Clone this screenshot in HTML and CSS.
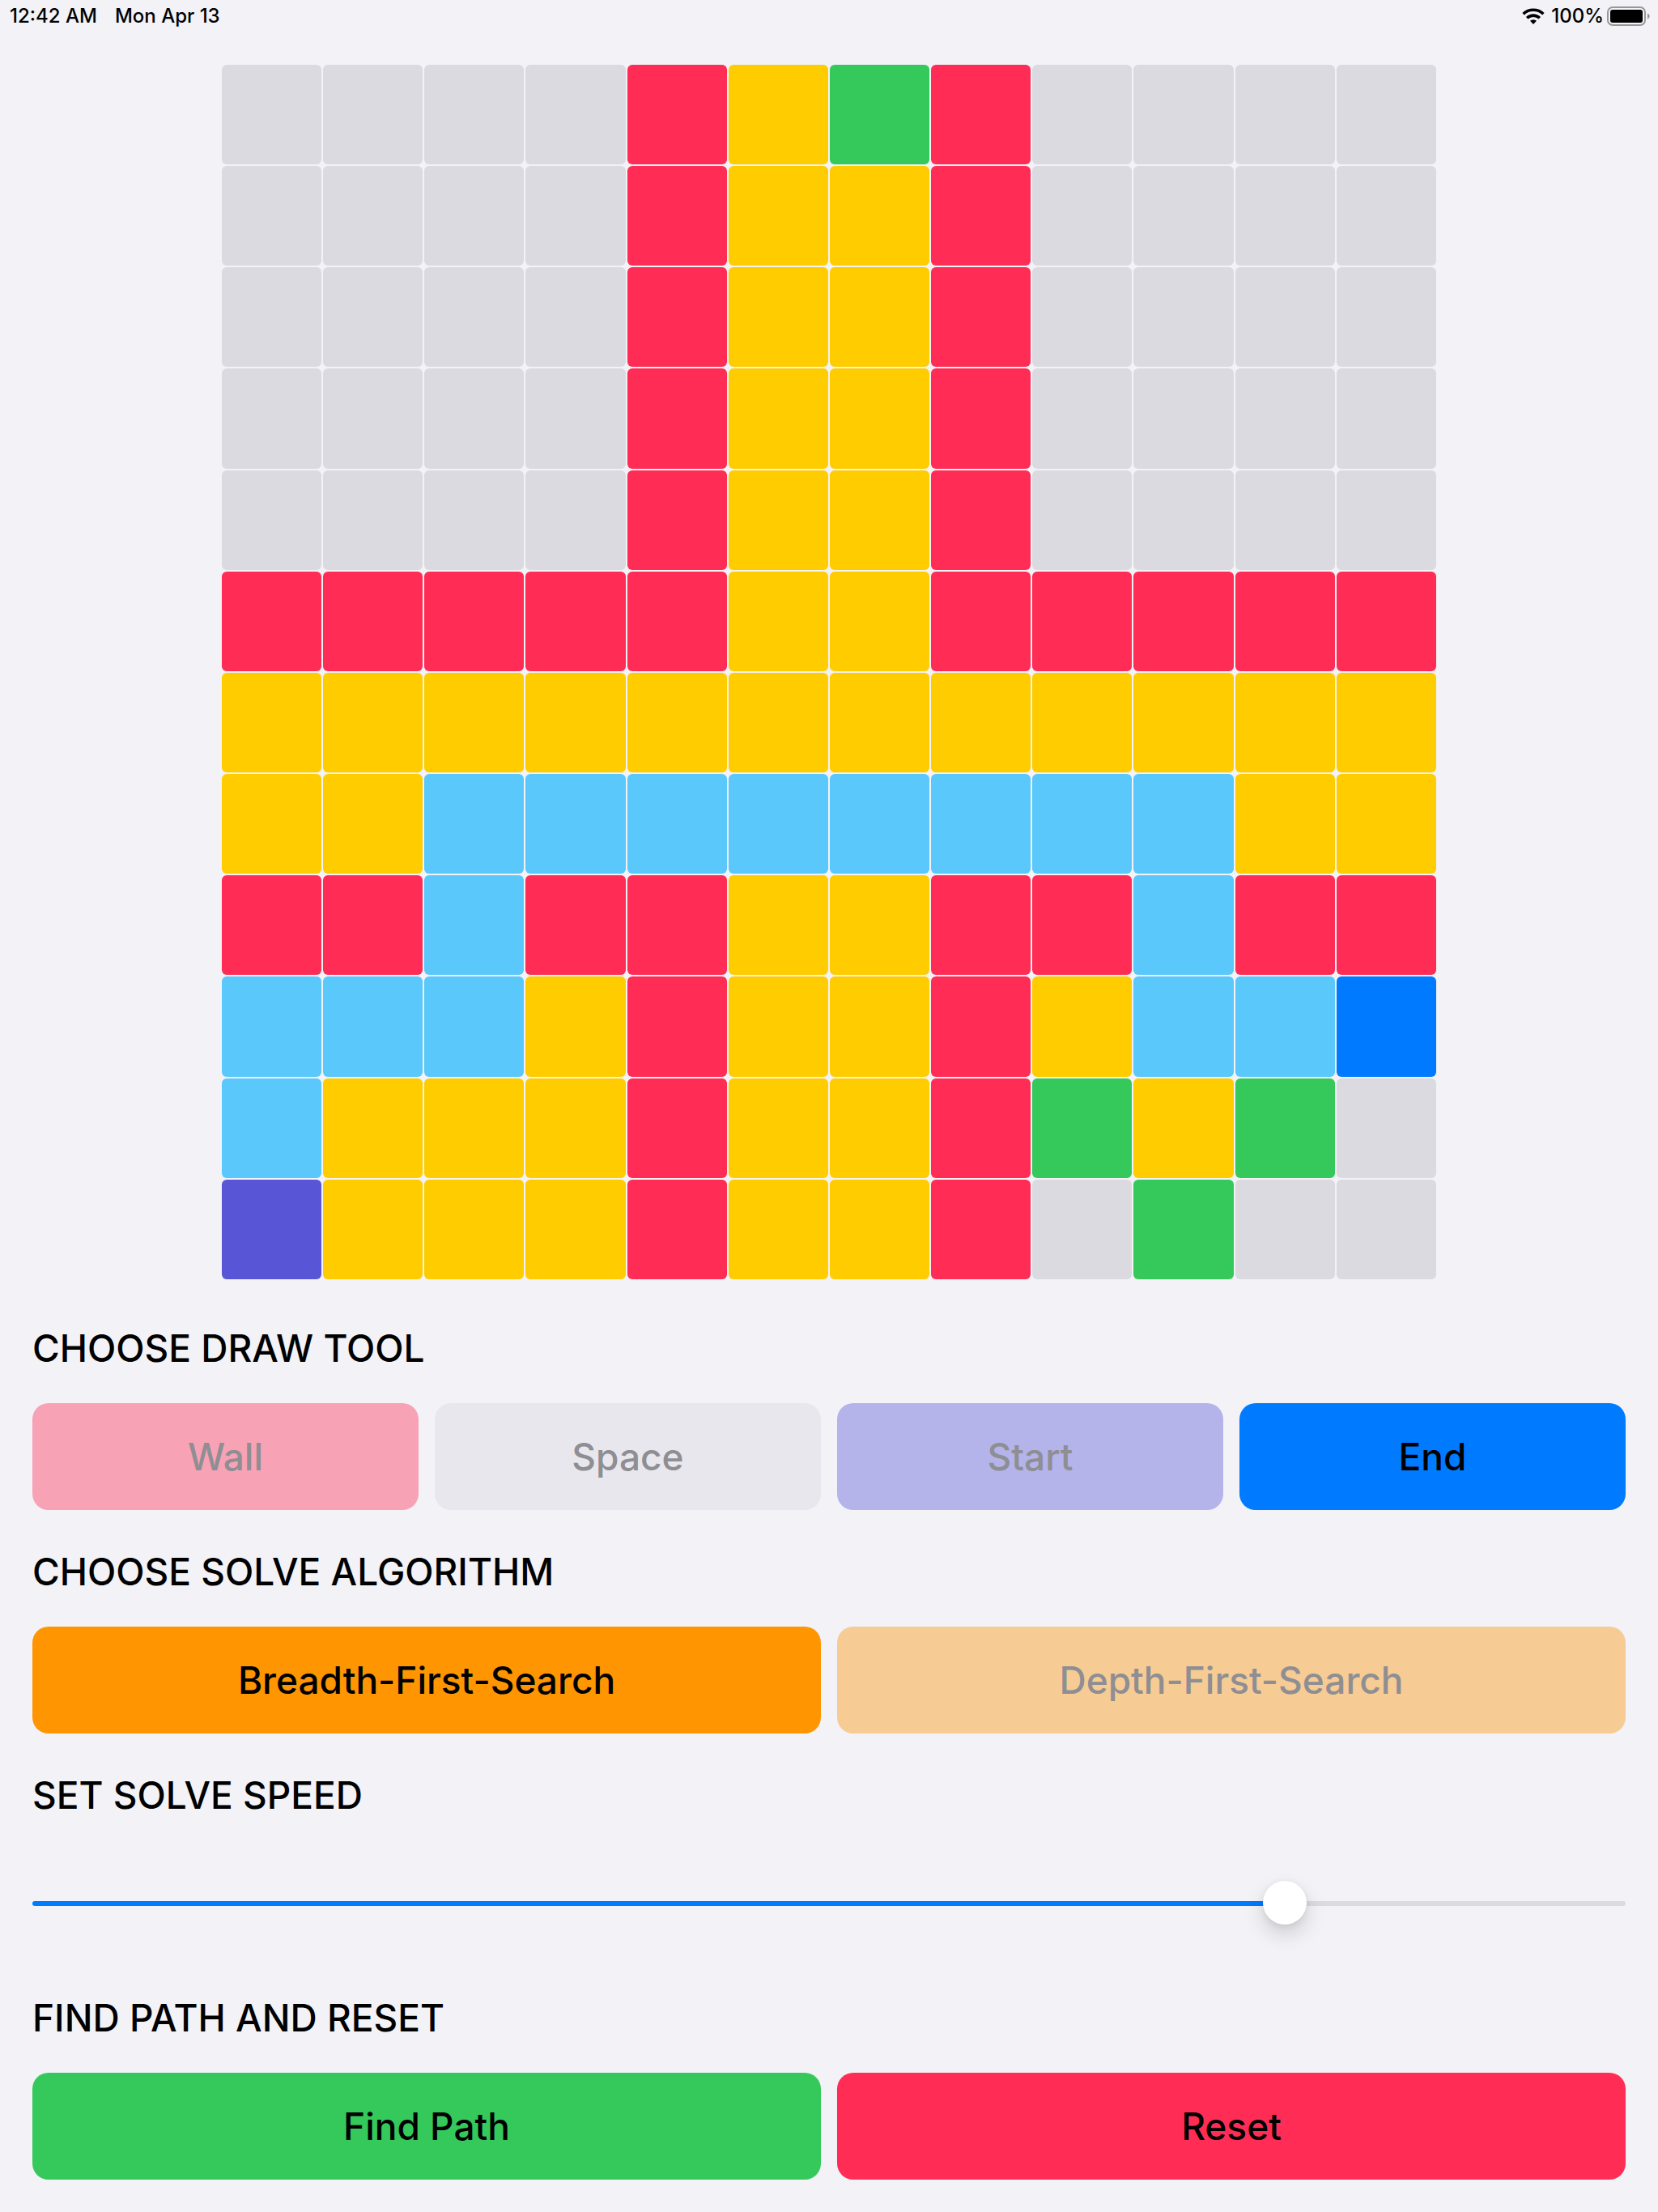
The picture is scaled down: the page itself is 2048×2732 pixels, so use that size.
FILE: index.html
```html
<!DOCTYPE html>
<html lang="en">
<head>
<meta charset="utf-8">
<meta name="viewport" content="width=device-width, initial-scale=1">
<title>Path Finder</title>
<link rel="stylesheet" href="styles.css">
</head>
<body>
<header class="status-bar">
  <div class="status-group status-clock">
    <span>12:42 AM</span>
    <span>Mon Apr 13</span>
  </div>
  <div class="status-group status-power">
    <svg class="wifi" viewBox="0 0 28 20" width="28" height="20" aria-hidden="true">
      <path d="M1.6 7.2a18 18 0 0 1 24.8 0" fill="none" stroke="#000" stroke-width="3.6"/>
      <path d="M6.2 12.2a11.4 11.4 0 0 1 15.6 0" fill="none" stroke="#000" stroke-width="3.6"/>
      <path d="M14 20l-4-4.300a6 6 0 0 1 8 0z" fill="#000"/>
    </svg>
    <span>100%</span>
    <svg class="battery" viewBox="0 0 54 24" width="54" height="24" aria-hidden="true">
      <rect x="1" y="1" width="46" height="22" rx="6" fill="none" stroke="#98989c" stroke-width="2"/>
      <rect x="4" y="4" width="40" height="16" rx="3" fill="#000"/>
      <path d="M50 8.500c3.600 1.200 3.600 5.800 0 7z" fill="#98989c"/>
    </svg>
  </div>
</header>

<main class="app">
  <div class="maze" id="maze" role="img" aria-label="Maze grid"></div>

  <section class="panel">
    <h2 class="panel-title">CHOOSE DRAW TOOL</h2>
    <div class="button-row">
      <button type="button" class="button wall muted">Wall</button>
      <button type="button" class="button space muted">Space</button>
      <button type="button" class="button start muted">Start</button>
      <button type="button" class="button end" aria-pressed="true">End</button>
    </div>
  </section>

  <section class="panel">
    <h2 class="panel-title">CHOOSE SOLVE ALGORITHM</h2>
    <div class="button-row">
      <button type="button" class="button breadth" aria-pressed="true">Breadth-First-Search</button>
      <button type="button" class="button depth muted">Depth-First-Search</button>
    </div>
  </section>

  <section class="panel">
    <h2 class="panel-title"><label for="speed">SET SOLVE SPEED</label></h2>
    <div class="slider-row">
      <input class="slider" id="speed" type="range" min="0" max="1" step="any" value="0.794" style="--value: 0.794">
    </div>
  </section>

  <section class="panel">
    <h2 class="panel-title">FIND PATH AND RESET</h2>
    <div class="button-row">
      <button type="button" class="button find">Find Path</button>
      <button type="button" class="button reset">Reset</button>
    </div>
  </section>
</main>
<script src="maze.js"></script>
</body>
</html>
```
FILE: styles.css
```css
:root {
  --background: #f2f2f7;
  --gray: #dbdae0;
  --red: #ff2d55;
  --yellow: #ffcc00;
  --green: #35c95b;
  --sky: #5ac8fb;
  --blue: #007aff;
  --indigo: #5856d6;
  --orange: #ff9500;
}

* {
  box-sizing: border-box;
}

body {
  margin: 0;
  background: var(--background);
  color: #000;
  font-family: Inter, sans-serif;
}

.status-bar {
  display: flex;
  justify-content: space-between;
  align-items: center;
  height: 40px;
  padding: 0 9px 0 12px;
  font-size: 24px;
  font-weight: 500;
  line-height: 40px;
}

.status-group {
  display: flex;
  align-items: center;
}

.status-clock {
  gap: 22px;
}

.status-power {
  gap: 4px;
}

.wifi {
  margin-right: 4px;
}

.app {
  display: flex;
  flex-direction: column;
  gap: 44px;
  padding: 40px;
}

.maze {
  display: grid;
  grid-template: repeat(12, 1fr) / repeat(12, 1fr);
  gap: 2px;
  width: min(100%, 1500px);
  aspect-ratio: 1;
  margin: 0 auto 9px;
}

.cell {
  border-radius: 6px;
  background: var(--gray);
}

.cell-wall { background: var(--red); }
.cell-visited { background: var(--yellow); }
.cell-frontier { background: var(--green); }
.cell-path { background: var(--sky); }
.cell-start { background: var(--indigo); }
.cell-end { background: var(--blue); }

.panel {
  display: flex;
  flex-direction: column;
  gap: 36px;
}

.panel-title {
  margin: 0;
  font-size: 46px;
  font-weight: 500;
  line-height: 64px;
}

.button-row {
  display: grid;
  grid-auto-flow: column;
  grid-auto-columns: minmax(0, 1fr);
  gap: 20px;
}

.button {
  height: 132px;
  padding: 0;
  border: 0;
  border-radius: 20px;
  color: #000;
  font-family: inherit;
  font-size: 46px;
  font-weight: 500;
  line-height: 64px;
}

.muted { color: #8e8e93; }
.wall { background: #f8a2b6; }
.space { background: #e8e7ed; }
.start { background: #b4b3ea; }
.end { background: var(--blue); }
.breadth { background: var(--orange); }
.depth { background: #f6cb94; }
.find { background: var(--green); }
.reset { background: var(--red); }

.slider-row {
  display: flex;
  align-items: center;
  height: 131px;
}

.slider {
  --fill: calc(27px + (100% - 54px) * var(--value));
  appearance: none;
  width: 100%;
  height: 54px;
  margin: 0;
  background: none;
}

.slider::-webkit-slider-runnable-track {
  height: 6px;
  border-radius: 3px;
  background: linear-gradient(to right, var(--blue) var(--fill), var(--gray) var(--fill));
}

.slider::-webkit-slider-thumb {
  appearance: none;
  width: 54px;
  height: 54px;
  margin-top: -25px;
  border-radius: 50%;
  background: #fff;
  box-shadow: 0 12px 26px rgb(0 0 0 / 15%), 0 2px 8px rgb(0 0 0 / 8%);
}
```
FILE: maze.js
```js
const rows = [
  "....#oF#....",
  "....#oo#....",
  "....#oo#....",
  "....#oo#....",
  "....#oo#....",
  "#####oo#####",
  "oooooooooooo",
  "oo********oo",
  "##*##oo##*##",
  "***o#oo#o**E",
  "*ooo#oo#FoF.",
  "Sooo#oo#.F..",
];

const kinds = {
  "#": "cell-wall",
  "o": "cell-visited",
  "F": "cell-frontier",
  "*": "cell-path",
  "S": "cell-start",
  "E": "cell-end",
};

const maze = document.getElementById("maze");
for (const symbol of rows.join("")) {
  const cell = document.createElement("div");
  cell.className = "cell";
  if (kinds[symbol]) cell.classList.add(kinds[symbol]);
  maze.append(cell);
}

const speed = document.getElementById("speed");
speed.addEventListener("input", () => speed.style.setProperty("--value", speed.value));
```
